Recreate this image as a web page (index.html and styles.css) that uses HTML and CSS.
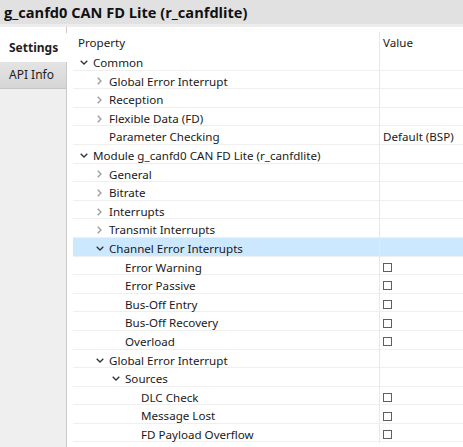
FILE: index.html
```html
<!DOCTYPE html>
<html>
<head>
<meta charset="utf-8">
<link rel="stylesheet" href="styles.css">
</head>
<body>
<div class="title">g_canfd0 CAN FD Lite (r_canfdlite)</div>
<div class="main">
  <div class="sidebar">
    <div class="tab-gap"></div>
    <div class="tab active">Settings</div>
    <div class="tab">API Info</div>
  </div>
  <div class="content">
    <div class="head">
      <div class="hname">Property</div>
      <div class="hval">Value</div>
    </div>
    <div class="row l1"><div class="name"><span class="tw"><svg class="exp" viewBox="0 0 8 5"><polyline points="0.7,0.7 4,4 7.3,0.7"/></svg></span>Common</div><div class="val"></div></div>
    <div class="row l2"><div class="name"><span class="tw"><svg class="col" viewBox="0 0 5 8"><polyline points="0.7,0.7 4,4 0.7,7.3"/></svg></span>Global Error Interrupt</div><div class="val"></div></div>
    <div class="row l2"><div class="name"><span class="tw"><svg class="col" viewBox="0 0 5 8"><polyline points="0.7,0.7 4,4 0.7,7.3"/></svg></span>Reception</div><div class="val"></div></div>
    <div class="row l2"><div class="name"><span class="tw"><svg class="col" viewBox="0 0 5 8"><polyline points="0.7,0.7 4,4 0.7,7.3"/></svg></span>Flexible Data (FD)</div><div class="val"></div></div>
    <div class="row l2"><div class="name"><span class="tw"></span>Parameter Checking</div><div class="val">Default (BSP)</div></div>
    <div class="row l1"><div class="name"><span class="tw"><svg class="exp" viewBox="0 0 8 5"><polyline points="0.7,0.7 4,4 7.3,0.7"/></svg></span>Module g_canfd0 CAN FD Lite (r_canfdlite)</div><div class="val"></div></div>
    <div class="row l2"><div class="name"><span class="tw"><svg class="col" viewBox="0 0 5 8"><polyline points="0.7,0.7 4,4 0.7,7.3"/></svg></span>General</div><div class="val"></div></div>
    <div class="row l2"><div class="name"><span class="tw"><svg class="col" viewBox="0 0 5 8"><polyline points="0.7,0.7 4,4 0.7,7.3"/></svg></span>Bitrate</div><div class="val"></div></div>
    <div class="row l2"><div class="name"><span class="tw"><svg class="col" viewBox="0 0 5 8"><polyline points="0.7,0.7 4,4 0.7,7.3"/></svg></span>Interrupts</div><div class="val"></div></div>
    <div class="row l2"><div class="name"><span class="tw"><svg class="col" viewBox="0 0 5 8"><polyline points="0.7,0.7 4,4 0.7,7.3"/></svg></span>Transmit Interrupts</div><div class="val"></div></div>
    <div class="row l2 sel"><div class="name"><span class="tw"><svg class="exp" viewBox="0 0 8 5"><polyline points="0.7,0.7 4,4 7.3,0.7"/></svg></span>Channel Error Interrupts</div><div class="val"></div></div>
    <div class="row l3"><div class="name"><span class="tw"></span>Error Warning</div><div class="val"><span class="cb"></span></div></div>
    <div class="row l3"><div class="name"><span class="tw"></span>Error Passive</div><div class="val"><span class="cb"></span></div></div>
    <div class="row l3"><div class="name"><span class="tw"></span>Bus-Off Entry</div><div class="val"><span class="cb"></span></div></div>
    <div class="row l3"><div class="name"><span class="tw"></span>Bus-Off Recovery</div><div class="val"><span class="cb"></span></div></div>
    <div class="row l3"><div class="name"><span class="tw"></span>Overload</div><div class="val"><span class="cb"></span></div></div>
    <div class="row l2"><div class="name"><span class="tw"><svg class="exp" viewBox="0 0 8 5"><polyline points="0.7,0.7 4,4 7.3,0.7"/></svg></span>Global Error Interrupt</div><div class="val"></div></div>
    <div class="row l3"><div class="name"><span class="tw"><svg class="exp" viewBox="0 0 8 5"><polyline points="0.7,0.7 4,4 7.3,0.7"/></svg></span>Sources</div><div class="val"></div></div>
    <div class="row l4"><div class="name"><span class="tw"></span>DLC Check</div><div class="val"><span class="cb"></span></div></div>
    <div class="row l4"><div class="name"><span class="tw"></span>Message Lost</div><div class="val"><span class="cb"></span></div></div>
    <div class="row l4"><div class="name"><span class="tw"></span>FD Payload Overflow</div><div class="val"><span class="cb"></span></div></div>
  </div>
</div>
</body>
</html>
```
FILE: styles.css
```css
html, body {
  margin: 0;
  padding: 0;
  background: #ffffff;
}
body {
  width: 463px;
  height: 447px;
  overflow: hidden;
  font-family: "Noto Sans", "Open Sans", sans-serif;
  font-size: 11.6px;
  color: #1a1a1a;
}
.title {
  height: 24px;
  line-height: 24px;
  background: #e1e1e1;
  padding-left: 4px;
  font-family: "Open Sans", "Noto Sans", sans-serif;
  font-weight: 700;
  font-size: 14.6px;
  color: #111;
  border-bottom: 3px solid #ededed;
  white-space: nowrap;
}
.main {
  display: flex;
  height: 420px;
}
.sidebar {
  width: 66px;
  flex: none;
  background: #efefef;
  border-right: 1px solid #c9c9c9;
  display: flex;
  flex-direction: column;
}
.tab-gap {
  height: 6px;
  background: #ffffff;
}
.tab {
  height: 27px;
  line-height: 26px;
  padding-left: 9px;
  box-sizing: border-box;
  font-size: 12px;
  color: #1e1e1e;
  background: linear-gradient(#e4e4e4, #d6d6d6);
  border-bottom: 1px solid #c6c6c6;
}
.tab.active {
  height: 29px;
  line-height: 30px;
  background: #ffffff;
  font-weight: 700;
  margin-right: -1px;
  border-bottom: none;
}
.content {
  flex: 1;
  padding-left: 6px;
  display: flex;
  flex-direction: column;
}
.head {
  display: grid;
  grid-template-columns: 306px 1fr;
  padding-top: 5px;
  height: 20px;
  line-height: 22px;
}
.hname {
  padding-left: 5px;
}
.hval {
  border-left: 1px solid #e8e8e8;
  padding-left: 3px;
}
.row {
  display: grid;
  grid-template-columns: 306px 1fr;
  height: 18.6px;
  box-sizing: border-box;
  border-bottom: 1px solid #efefef;
  line-height: 17.6px;
  white-space: nowrap;
}
.row.sel {
  background: #cce8ff;
}
.name {
  display: flex;
  align-items: center;
  padding-top: 2px;
  box-sizing: border-box;
}
.l1 .name { padding-left: 4px; }
.l2 .name { padding-left: 20px; }
.l3 .name { padding-left: 36px; }
.l4 .name { padding-left: 52px; }
.tw {
  width: 16px;
  height: 15px;
  flex: none;
  display: flex;
  align-items: center;
}
.tw svg {
  fill: none;
  stroke-width: 1.3;
}
.tw .exp {
  width: 8px;
  height: 5px;
  margin-left: 3px;
  stroke: #333;
}
.tw .col {
  width: 5px;
  height: 8px;
  margin-left: 4px;
  stroke: #9a9a9a;
}
.val {
  border-left: 1px solid #e8e8e8;
  padding-left: 3px;
  padding-top: 2px;
  display: flex;
  align-items: center;
}
.cb {
  width: 7px;
  height: 7px;
  border: 1px solid #5f5f5f;
  background: #fff;
}
```
